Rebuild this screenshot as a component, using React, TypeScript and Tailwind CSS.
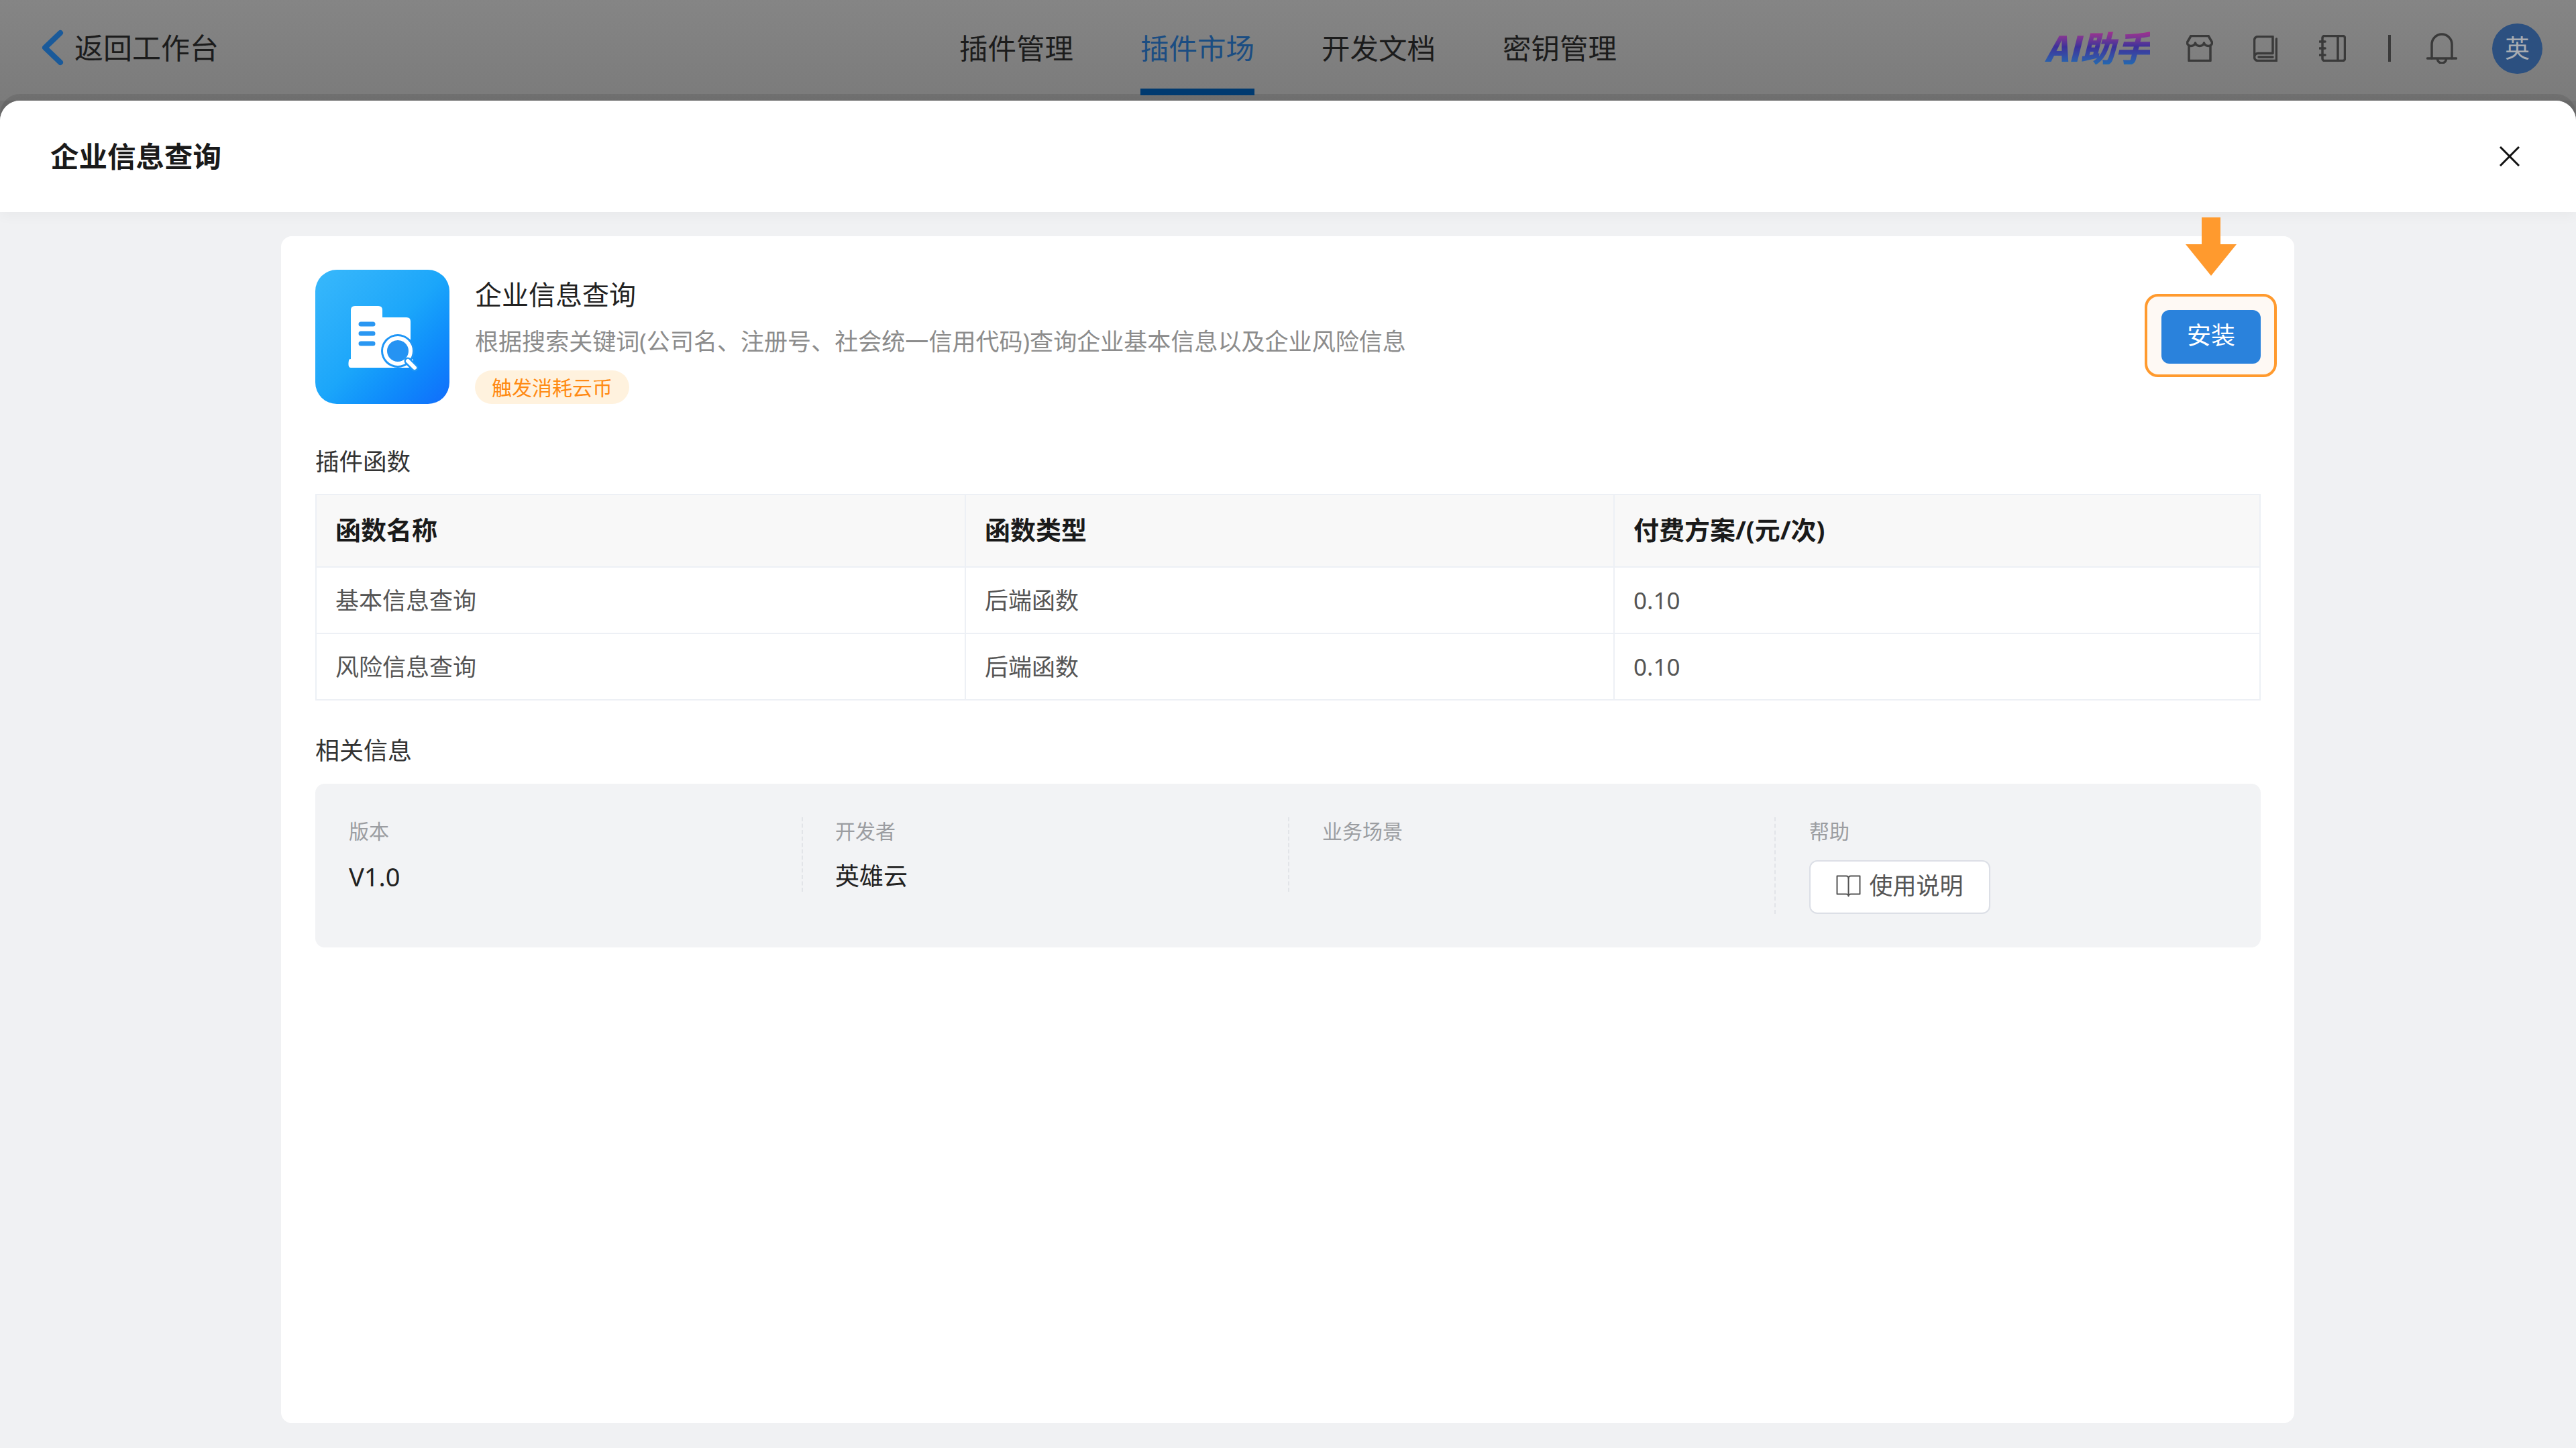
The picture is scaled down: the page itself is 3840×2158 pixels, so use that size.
import React from 'react'

const navItems = ['插件管理', '插件市场', '开发文档', '密钥管理']

const rows = [
  { name: '基本信息查询', type: '后端函数', price: '0.10' },
  { name: '风险信息查询', type: '后端函数', price: '0.10' },
]

function StoreIcon() {
  return (
    <svg width="40" height="40" viewBox="0 0 40 40" fill="none" stroke="#3a3a3a" strokeWidth="3.5" strokeLinejoin="round" strokeLinecap="round">
      <path d="M7 1.5H33L38.5 11C39 14.5 36 16.5 33 16.5C30 16.5 27.5 15 26.5 12C25.5 15 23 16.5 20 16.5C17 16.5 14.5 15 13.5 12C12.5 15 10 16.5 7 16.5C4 16.5 1 14.5 1.5 11Z" />
      <path d="M4 17V38.5H36V17" />
    </svg>
  )
}

function BookIcon() {
  return (
    <svg width="36" height="39" viewBox="0 0 36 39" fill="none" stroke="#3a3a3a" strokeWidth="3.5" strokeLinejoin="round" strokeLinecap="round">
      <path d="M29 26.5V1.5H7A5.5 5.5 0 0 0 1.5 7V32A5.5 5.5 0 0 1 7 26.5H29" />
      <path d="M1.5 32A5.5 5.5 0 0 0 7 37.5H34.5V5" />
      <path d="M8 32H29" />
    </svg>
  )
}

function NotebookIcon() {
  return (
    <svg width="40" height="40" viewBox="0 0 40 40" fill="none" stroke="#3a3a3a" strokeWidth="3.5" strokeLinejoin="round" strokeLinecap="round">
      <rect x="5" y="1.5" width="33.5" height="37" rx="3" />
      <path d="M28 2V38" />
      <path d="M1 10H9M1 20H9M1 30H9" />
    </svg>
  )
}

function BellIcon() {
  return (
    <svg width="46" height="46" viewBox="0 0 46 46" fill="none" stroke="#3a3a3a" strokeWidth="3.5" strokeLinejoin="round" strokeLinecap="round">
      <path d="M8 38V17A15 15 0 0 1 38 17V38" />
      <path d="M1.5 38H44.5" />
      <path d="M16.5 39A6.5 6 0 0 0 29.5 39" />
    </svg>
  )
}

function PluginLogo() {
  return (
    <div className="w-[200px] h-[200px] shrink-0 rounded-[32px] bg-linear-to-br from-[#38b8fb] via-[#1ba6fa] to-[#136cfb]">
      <svg width="200" height="200" viewBox="0 0 200 200" fill="none">
        <path
          d="M53 131V60Q53 54 59 54H94Q100 54 100 60V71H136Q142 71 142 77V133H145Q147 135 145 146H53Q48 146 50 135Q50 133 53 133Z"
          fill="#fff"
        />
        <path d="M68 81H86M68 95H86M68 110H86" stroke="#2a97f2" strokeWidth="7" strokeLinecap="round" />
        <circle cx="123" cy="121" r="25" fill="#1f96f6" />
        <circle cx="123" cy="121" r="19" fill="#2593f3" stroke="#fff" strokeWidth="6" />
        <path d="M138 136L148 146" stroke="#1f96f6" strokeWidth="11" strokeLinecap="round" />
        <path d="M138 136L148 146" stroke="#fff" strokeWidth="6" strokeLinecap="round" />
      </svg>
    </div>
  )
}

function InfoLabel({ children }: { children: React.ReactNode }) {
  return <div className="text-[30px] leading-[42px] text-[#9b9da1]">{children}</div>
}

export default function App() {
  return (
    <div className="w-[3840px] h-[2158px] overflow-hidden flex flex-col bg-[#747474] font-['Noto_Sans','Noto_Sans_CJK_SC',sans-serif]">
      {/* Top bar, dimmed by the sheet's overlay */}
      <header className="h-[150px] shrink-0 grid grid-cols-[1fr_auto_1fr] bg-linear-to-b from-[#858585] to-[#7b7b7b] text-[#1c1c1c]">
        <div className="flex items-center gap-[16px] pl-[62px] pb-[8px]">
          <svg width="33" height="54" viewBox="0 0 33 54" fill="none">
            <path d="M28 5L5 27L28 49" stroke="#1a5a9a" strokeWidth="8" strokeLinecap="round" strokeLinejoin="round" />
          </svg>
          <span className="text-[43px] leading-none">返回工作台</span>
        </div>

        <nav className="flex gap-[100px]">
          {navItems.map((item) => (
            <div key={item} className="relative flex items-center h-full pb-[6px]">
              <span className={`text-[42.5px] leading-none ${item === '插件市场' ? 'text-[#1b4d82]' : ''}`}>{item}</span>
              {item === '插件市场' && <div className="absolute left-0 right-0 bottom-[8px] h-[10px] bg-[#003a70]" />}
            </div>
          ))}
        </nav>

        <div className="flex items-center justify-end pr-[50px] pb-[6px]">
          <span className="mr-[54px] mb-[5px] font-['Noto_Sans_CJK_SC',sans-serif] text-[52px] leading-none italic font-black bg-linear-to-b from-[#b02a8c] via-[#3c309a] to-[#2068b0] bg-clip-text text-transparent">
            AI助手
          </span>
          <div className="mr-[60px]"><StoreIcon /></div>
          <div className="mr-[62px]"><BookIcon /></div>
          <div className="mr-[63px]"><NotebookIcon /></div>
          <div className="mr-[53px] w-[4px] h-[40px] bg-[#3a3a3a]" />
          <div className="mr-[52px]"><BellIcon /></div>
          <div className="w-[75px] h-[75px] rounded-full bg-[#2c5080] flex items-center justify-center text-[37px] text-[#a8acb2]">英</div>
        </div>
      </header>

      {/* Sheet */}
      <div className="flex-1 flex flex-col rounded-t-[30px] bg-[#f0f1f3] shadow-[0_-10px_0_rgba(0,0,0,0.09)]">
        <div className="h-[166px] shrink-0 flex items-center justify-between pl-[75px] pr-[84px] bg-white rounded-t-[30px] shadow-[0_6px_20px_rgba(0,0,0,0.035)]">
          <h1 className="text-[42.5px] font-bold text-[#1a1a1a]">企业信息查询</h1>
          <svg width="30" height="30" viewBox="0 0 30 30" fill="none">
            <path d="M1 1L29 29M29 1L1 29" stroke="#111" strokeWidth="3" />
          </svg>
        </div>

        <div className="flex-1 flex flex-col pt-[36px] pb-[37px] pl-[419px] pr-[420px]">
          <div className="flex-1 rounded-[16px] bg-white pt-[50px] pl-[51px] pr-[50px]">
            {/* Plugin summary */}
            <div className="flex items-start">
              <PluginLogo />
              <div className="ml-[38px] flex-1">
                <div className="text-[40px] leading-[74px] text-[#222]">企业信息查询</div>
                <div className="text-[35.05px] leading-[66px] text-[#8c8c8c]">
                  根据搜索关键词(公司名、注册号、社会统一信用代码)查询企业基本信息以及企业风险信息
                </div>
                <div className="mt-[10px] w-[230px] h-[50px] rounded-full bg-[#fff2de] flex items-center justify-center text-[30px] text-[#ff8a14]">
                  触发消耗云币
                </div>
              </div>

              <div className="relative mt-[60px]">
                <div className="absolute left-[-25px] right-[-24px] top-[-24px] bottom-[-20px] rounded-[20px] border-4 border-[#ff9a2e] bg-[#fef9f4]" />
                <svg className="absolute left-[36px] bottom-[131px]" width="76" height="87" viewBox="0 0 76 87">
                  <path d="M24 0H52V40H76L38 87L0 40H24Z" fill="#ff9a2e" />
                </svg>
                <button className="relative block w-[148px] h-[80px] pb-[4px] rounded-[12px] bg-[#2a82dc] text-[36px] text-white">安装</button>
              </div>
            </div>

            {/* Functions table */}
            <div className="mt-[61px] text-[35.5px] leading-[48px] text-[#333]">插件函数</div>
            <table className="mt-[25px] w-full table-fixed border-collapse text-[35px] text-[#555]">
              <thead>
                <tr className="h-[108px] bg-[#f8f8f8] text-[#1a1a1a] font-bold text-[38px]">
                  <th className="w-[968px] border-2 border-[#edf0f5] pl-[28px] pb-[3px] text-left">函数名称</th>
                  <th className="w-[967px] border-2 border-[#edf0f5] pl-[28px] pb-[3px] text-left">函数类型</th>
                  <th className="border-2 border-[#edf0f5] pl-[28px] pb-[3px] text-left">付费方案/(元/次)</th>
                </tr>
              </thead>
              <tbody>
                {rows.map((row) => (
                  <tr key={row.name} className="h-[99px]">
                    <td className="border-2 border-[#edf0f5] pl-[28px] pt-[1px]">{row.name}</td>
                    <td className="border-2 border-[#edf0f5] pl-[28px] pt-[1px]">{row.type}</td>
                    <td className="border-2 border-[#edf0f5] pl-[28px] pt-[1px]">{row.price}</td>
                  </tr>
                ))}
              </tbody>
            </table>

            {/* Related info */}
            <div className="mt-[51px] text-[36px] leading-[48px] text-[#333]">相关信息</div>
            <div className="mt-[25px] h-[244px] rounded-[14px] bg-[#f2f3f5] pt-[50px] grid grid-cols-4 items-start">
              <div className="pl-[50px]">
                <InfoLabel>版本</InfoLabel>
                <div className="mt-[23px] text-[38px] leading-[46px] text-[#222]">V1.0</div>
              </div>
              <div className="pl-[48px] border-l-2 border-dashed border-[#e2e4e8]">
                <InfoLabel>开发者</InfoLabel>
                <div className="mt-[23px] text-[36px] leading-[46px] text-[#222]">英雄云</div>
              </div>
              <div className="pl-[49px] border-l-2 border-dashed border-[#e2e4e8]">
                <InfoLabel>业务场景</InfoLabel>
                <div className="mt-[23px] h-[46px]" />
              </div>
              <div className="pl-[50px] border-l-2 border-dashed border-[#e2e4e8]">
                <InfoLabel>帮助</InfoLabel>
                <button className="mt-[22px] w-[270px] h-[80px] pb-[3px] rounded-[12px] border-2 border-[#dcdfe6] bg-white flex items-center justify-center gap-[12px] text-[35px] text-[#555]">
                  <svg width="37" height="33" viewBox="0 0 37 33" fill="none" stroke="#555" strokeWidth="2" strokeLinejoin="round">
                    <path d="M18.5 5C18.5 3 17 1.5 15 1.5H1.5V28.5H15C17 28.5 18.5 29.5 18.5 31.5C18.5 29.5 20 28.5 22 28.5H35.5V1.5H22C20 1.5 18.5 3 18.5 5Z" />
                    <path d="M18.5 5V31" />
                  </svg>
                  使用说明
                </button>
              </div>
            </div>
          </div>
        </div>
      </div>
    </div>
  )
}
